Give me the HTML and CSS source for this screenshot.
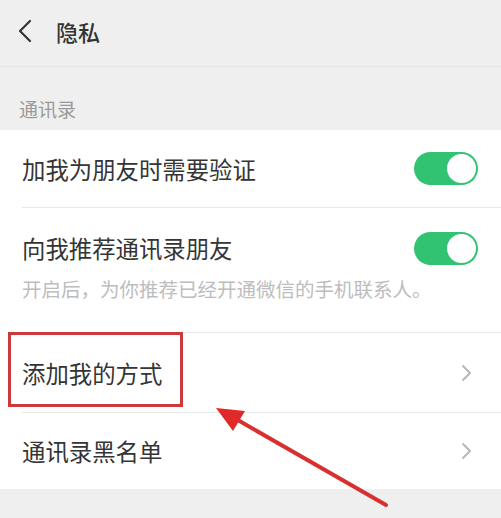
FILE: index.html
```html
<!DOCTYPE html>
<html lang="zh-CN">
<head>
<meta charset="utf-8">
<title>隐私</title>
<link rel="stylesheet" href="styles.css">
</head>
<body>
<div class="page">
  <header class="header">
    <svg class="back" width="16" height="24" viewBox="0 0 16 24"><path d="M13 2 L3 12 L13 22" fill="none" stroke="#333" stroke-width="2.2" stroke-linecap="round" stroke-linejoin="round"/></svg>
    <span class="title">隐私</span>
  </header>
  <div class="section-label">通讯录</div>
  <div class="panel">
    <div class="row">
      <span class="row-text">加我为朋友时需要验证</span>
      <span class="toggle"><span class="knob"></span></span>
    </div>
    <div class="row row-tall">
      <div class="row-main">
        <span class="row-text">向我推荐通讯录朋友</span>
        <span class="toggle"><span class="knob"></span></span>
      </div>
      <div class="row-sub">开启后，为你推荐已经开通微信的手机联系人。</div>
    </div>
    <div class="row row-link row-highlight">
      <span class="row-text">添加我的方式</span>
      <svg class="chev" width="12" height="18" viewBox="0 0 12 18"><path d="M2 2 L9 9 L2 16" fill="none" stroke="#b5b5b5" stroke-width="1.8" stroke-linecap="round" stroke-linejoin="round"/></svg>
      <span class="mark-box"></span>
    </div>
    <div class="row row-link">
      <span class="row-text">通讯录黑名单</span>
      <svg class="chev" width="12" height="18" viewBox="0 0 12 18"><path d="M2 2 L9 9 L2 16" fill="none" stroke="#b5b5b5" stroke-width="1.8" stroke-linecap="round" stroke-linejoin="round"/></svg>
    </div>
  </div>
  <svg class="arrow" width="501" height="518" viewBox="0 0 501 518">
    <line x1="386" y1="505" x2="236" y2="419" stroke="#d8302f" stroke-width="4" stroke-linecap="round"/>
    <polygon points="216,408 245,411 233,431" fill="#e02a2a"/>
  </svg>
</div>
</body>
</html>
```
FILE: styles.css
```css
* { box-sizing: border-box; }
html, body {
  margin: 0;
  padding: 0;
  background: #efefef;
}
body {
  font-family: "Noto Sans CJK SC", "Noto Sans", sans-serif;
  color: #353535;
}
.page {
  position: relative;
  width: 501px;
  height: 518px;
  overflow: hidden;
  background: #efefef;
}
.header {
  height: 67px;
  display: flex;
  align-items: center;
  padding-left: 17px;
  padding-bottom: 4px;
  border-bottom: 1px solid #e6e6e6;
}
.back { display: block; }
.title {
  margin-left: 23px;
  font-size: 22px;
  line-height: 26px;
  font-weight: 500;
  color: #333;
}
.section-label {
  height: 63px;
  display: flex;
  align-items: flex-end;
  padding-left: 19px;
  padding-bottom: 10px;
  font-size: 19px;
  line-height: 22px;
  color: #9a9a9a;
}
.panel {
  background: #fff;
  padding-bottom: 1px;
}
.row {
  position: relative;
  margin-left: 22px;
  padding-right: 23px;
  height: 77px;
  display: flex;
  align-items: center;
  justify-content: space-between;
  border-top: 1px solid #e8e8e8;
}
.row:first-child { border-top: none; }
.row-tall {
  height: 125px;
  display: block;
  padding-top: 23px;
}
.row-main {
  height: 34px;
  display: flex;
  align-items: center;
  justify-content: space-between;
}
.row-sub {
  margin-top: 12px;
  font-size: 19.5px;
  line-height: 24px;
  color: #bdbdbd;
  white-space: nowrap;
}
.row-link {
  height: 80px;
  padding-right: 28px;
}
.row-link:last-child { height: 76px; }
.row-text {
  font-size: 23.4px;
  line-height: 30px;
  color: #353535;
}
.toggle {
  width: 64px;
  height: 33px;
  border-radius: 17px;
  background: #31c372;
  padding: 2px;
  display: flex;
  justify-content: flex-end;
}
.knob {
  width: 29px;
  height: 29px;
  border-radius: 50%;
  background: #fff;
}
.chev { display: block; }
.mark-box {
  position: absolute;
  left: -14px;
  top: -1px;
  width: 175px;
  height: 75px;
  border: 3px solid #cc393b;
  pointer-events: none;
}
.arrow {
  position: absolute;
  left: 0;
  top: 0;
  pointer-events: none;
}
```
